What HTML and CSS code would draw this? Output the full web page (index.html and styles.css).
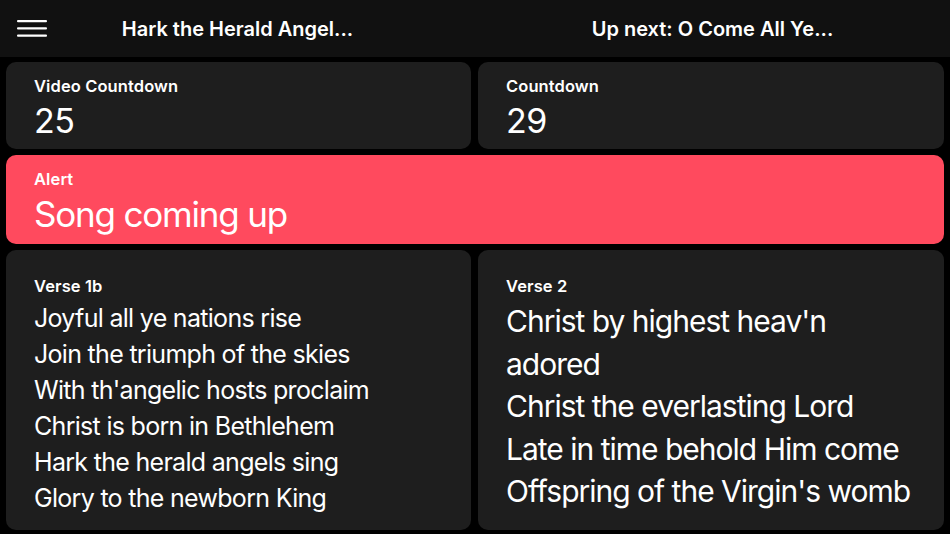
FILE: index.html
```html
<!DOCTYPE html>
<html lang="en">
<head>
<meta charset="utf-8">
<title>Stage Display</title>
<link rel="stylesheet" href="styles.css">
</head>
<body>
<header class="topbar">
  <button class="menu" aria-label="Menu">
    <svg width="30" height="17" viewBox="0 0 30 17"><rect x="0" y="0" width="30" height="2.2" rx="1" fill="#fff"/><rect x="0" y="7.3" width="30" height="2.2" rx="1" fill="#fff"/><rect x="0" y="14.6" width="30" height="2.2" rx="1" fill="#fff"/></svg>
  </button>
  <div class="title">Hark the Herald Angel...</div>
  <div class="title">Up next: O Come All Ye...</div>
</header>
<main class="grid">
  <section class="card small">
    <div class="label">Video Countdown</div>
    <div class="value">25</div>
  </section>
  <section class="card small">
    <div class="label">Countdown</div>
    <div class="value">29</div>
  </section>
  <section class="card alert">
    <div class="label">Alert</div>
    <div class="alert-text">Song coming up</div>
  </section>
  <section class="card verse">
    <div class="label">Verse 1b</div>
    <div class="lines l1">
      <div>Joyful all ye nations rise</div>
      <div>Join the triumph of the skies</div>
      <div>With th'angelic hosts proclaim</div>
      <div>Christ is born in Bethlehem</div>
      <div>Hark the herald angels sing</div>
      <div>Glory to the newborn King</div>
    </div>
  </section>
  <section class="card verse">
    <div class="label">Verse 2</div>
    <div class="lines l2">
      <div>Christ by highest heav'n<br>adored</div>
      <div>Christ the everlasting Lord</div>
      <div>Late in time behold Him come</div>
      <div>Offspring of the Virgin's womb</div>
    </div>
  </section>
</main>
</body>
</html>
```
FILE: styles.css
```css
* { box-sizing: border-box; }
html, body { height: 100%; }
body {
  margin: 0;
  background: #000;
  color: #fff;
  font-family: Inter, "Noto Sans", "Liberation Sans", sans-serif;
  display: flex;
  flex-direction: column;
  overflow: hidden;
}
.topbar {
  position: relative;
  height: 57px;
  flex: none;
  background: #111;
  display: grid;
  grid-template-columns: 1fr 1fr;
  align-items: center;
}
.menu {
  position: absolute;
  left: 17px;
  top: 20px;
  padding: 0;
  border: 0;
  background: none;
  line-height: 0;
}
.title {
  text-align: center;
  font-size: 20px;
  font-weight: 600;
  letter-spacing: 0;
}
.grid {
  flex: 1;
  display: grid;
  grid-template-columns: 465px 1fr;
  grid-template-rows: 87px 89px 1fr;
  column-gap: 7px;
  row-gap: 6px;
  padding: 5px 6px 4px;
}
.card {
  background: #1e1e1e;
  border-radius: 10px;
  padding: 14px 28px;
}
.alert {
  grid-column: 1 / 3;
  background: #ff4a5e;
}
.label {
  font-size: 16.5px;
  font-weight: 600;
  line-height: 20px;
  letter-spacing: 0.1px;
}
.value {
  font-size: 34px;
  line-height: 40px;
  margin-top: 5px;
  letter-spacing: -0.5px;
}
.alert-text {
  font-size: 35px;
  line-height: 44px;
  margin-top: 3px;
  letter-spacing: -1.2px;
}
.verse { padding-top: 26px; }
.lines { margin-top: 4px; }
.l1 { font-size: 25px; line-height: 36px; letter-spacing: -0.7px; }
.l2 { font-size: 30px; line-height: 42.5px; margin-top: 4px; letter-spacing: -1px; }
```
